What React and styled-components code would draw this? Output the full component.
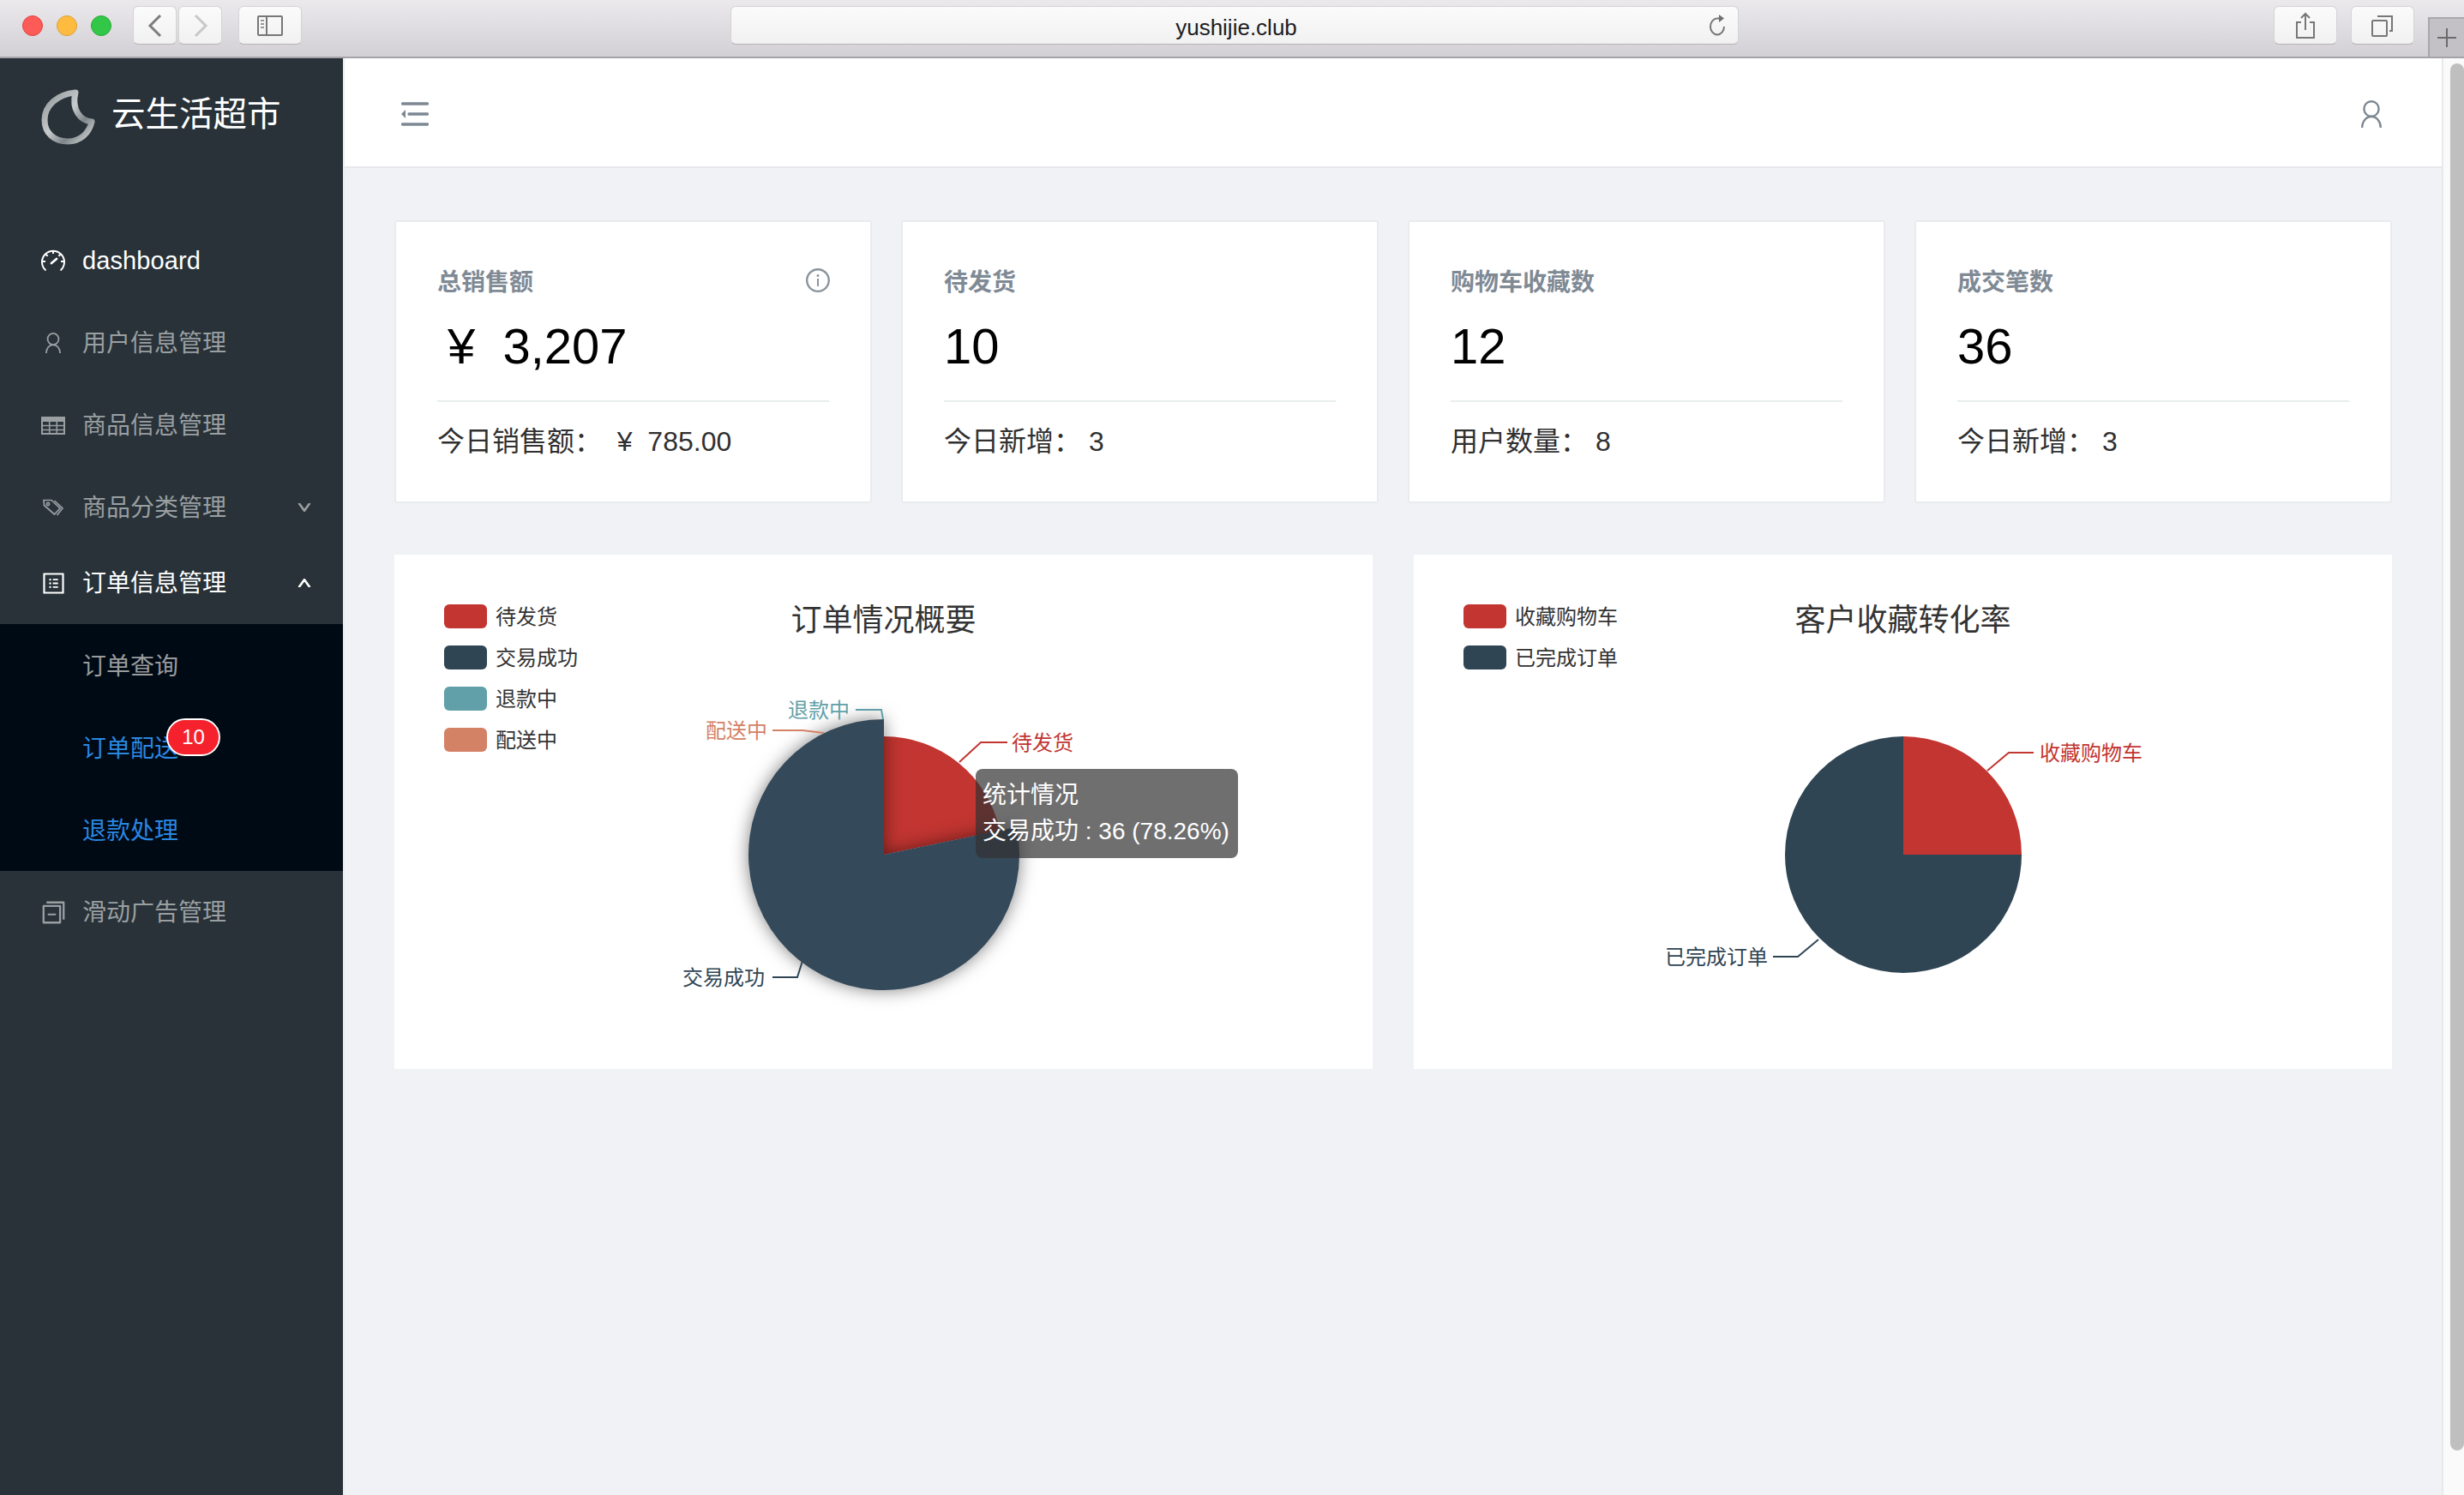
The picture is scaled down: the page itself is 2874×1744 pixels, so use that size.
import React from "react";
import styled, { createGlobalStyle } from "styled-components";
import { AiOutlineProfile, AiOutlineSwitcher, AiOutlineInfoCircle, AiOutlineDown, AiOutlineUp } from "react-icons/ai";

const FONT = `"Liberation Sans", "Noto Sans CJK SC", sans-serif`;

const GlobalStyle = createGlobalStyle`
	html, body { margin: 0; padding: 0; background: #f0f2f5; }
	body { font-family: ${FONT}; overflow: hidden; }
	* { box-sizing: border-box; }
`;

const Page = styled.div`
	width: 2874px;
	height: 1744px;
	display: flex;
	flex-direction: column;
	overflow: hidden;
`;

/* browser chrome */
const BrowserBar = styled.div`
	height: 68px;
	flex: none;
	display: flex;
	align-items: flex-start;
	padding: 7px 0 0 26px;
	background: linear-gradient(#ebe9ec, #d2d0d4);
	border-bottom: 2px solid #a5a3a7;
`;
const Light = styled.span`
	width: 24px;
	height: 24px;
	flex: none;
	margin: 11px 16px 0 0;
	border-radius: 50%;
	background: ${(p) => p.$color};
	border: 1px solid ${(p) => p.$edge};
`;
const ChromeButton = styled.div`
	width: ${(p) => p.$w}px;
	height: 45px;
	margin-left: ${(p) => p.$ml || 0}px;
	flex: none;
	display: flex;
	align-items: center;
	justify-content: center;
	border-radius: 6px;
	background: linear-gradient(#fbfbfb, #f2f1f2);
	border: 1px solid #d4d3d5;
	border-bottom-color: #b5b4b6;
`;
const AddressBar = styled.div`
	width: 1176px;
	height: 45px;
	margin-left: 500px;
	padding: 5px 0 0 4px;
	flex: none;
	display: flex;
	align-items: center;
	justify-content: center;
	position: relative;
	border-radius: 6px;
	background: linear-gradient(#fbfbfb, #f2f1f2);
	border: 1px solid #d4d3d5;
	border-bottom-color: #b5b4b6;
	font-size: 26px;
	color: #1d1d1d;
`;
const Reload = styled.svg`
	position: absolute;
	right: 12px;
	top: 9px;
`;
const NewTab = styled.div`
	width: 42px;
	height: 46px;
	margin: 13px 0 0 16px;
	flex: none;
	display: flex;
	align-items: center;
	justify-content: center;
	background: #c3c1c5;
	border: 2px solid #a9a7ab;
	border-width: 2px 0 0 2px;
`;

const Body = styled.div`
	flex: 1;
	display: flex;
	min-height: 0;
`;

/* sidebar */
const Sidebar = styled.aside`
	width: 400px;
	flex: none;
	background: #283238;
`;
const Brand = styled.div`
	height: 188px;
	display: flex;
	align-items: flex-start;
	padding: 36px 0 0 47px;
	gap: 17px;
	color: #fff;
`;
const BrandName = styled.span`
	font-size: 39.5px;
	line-height: 60px;
	font-family: "Liberation Serif", "Noto Sans CJK SC", serif;
`;
const MenuItem = styled.div`
	height: ${(p) => p.$h || 96}px;
	padding: ${(p) => (p.$h ? "0 36px 8px 48px" : "0 36px 0 48px")};
	display: flex;
	align-items: center;
	font-size: 28px;
	color: ${(p) => (p.$active ? "#fff" : "#9a9fa2")};
	svg.caret { font-size: 18px; margin-left: auto; stroke-width: 70; stroke: currentColor; }
`;
const IconSlot = styled.span`
	width: 28px;
	height: 28px;
	margin-right: 20px;
	flex: none;
	display: flex;
	align-items: center;
	justify-content: center;
	font-size: ${(p) => p.$size || 32}px;
	svg { flex: none; }
`;
/* the CJK face sits low in its line box, so lift it a little */
const MenuText = styled.span`
	margin-bottom: 4px;
`;
const LatinText = styled.span`
	font-size: 29px;
	letter-spacing: 0.1px;
`;
const SubMenu = styled.div`
	background: #000a14;
`;
const SubItem = styled.div`
	height: 96px;
	padding-left: 96px;
	display: flex;
	align-items: center;
	font-size: 28px;
	color: ${(p) => (p.$active ? "#2a87e2" : "#9a9b9d")};
`;
const SubLabel = styled.span`
	position: relative;
	margin-bottom: 3px;
`;
const Badge = styled.span`
	position: absolute;
	left: 98px;
	top: -13px;
	width: 63px;
	height: 44px;
	border-radius: 22px;
	background: #f5222d;
	border: 2px solid #fff;
	color: #fff;
	font-size: 24px;
	display: flex;
	align-items: center;
	justify-content: center;
`;

/* main column */
const Main = styled.main`
	flex: 1;
	min-width: 0;
	background: #f0f2f5;
	border-left: 2px solid #eaecef;
	border-right: 2px solid #e8e9ec;
	display: flex;
	flex-direction: column;
`;
const TopBar = styled.header`
	height: 128px;
	flex: none;
	background: #fff;
	border-bottom: 2px solid #e6e8ec;
	display: flex;
	align-items: center;
	justify-content: space-between;
	padding: 3px 70px 0 66px;
`;
const Content = styled.div`
	padding: 61px 58px 0 58px;
	display: flex;
	flex-direction: column;
	gap: 60px;
`;
const StatRow = styled.div`
	display: grid;
	grid-template-columns: repeat(4, 1fr);
	gap: 34px;
`;
const StatCard = styled.section`
	height: 330px;
	background: #fff;
	border: 2px solid #e9ebee;
	border-radius: 3px;
	padding: 48px 48px 0;
`;
const StatHead = styled.div`
	display: flex;
	justify-content: space-between;
	align-items: center;
	height: 40px;
	font-size: 28px;
	font-weight: 700;
	color: #7f8a95;
	svg { font-size: 32px; margin-right: -3px; color: #8a949d; }
`;
const StatValue = styled.div`
	height: 80px;
	margin-top: 16px;
	display: flex;
	align-items: center;
	font-size: 58px;
	color: #000;
	white-space: pre;
	padding-left: ${(p) => p.$pad || 0}px;
`;
const StatFoot = styled.div`
	margin-top: 24px;
	padding-top: 22px;
	border-top: 2px solid #e8eded;
	font-size: 32px;
	line-height: 48px;
	color: #303030;
	white-space: pre;
`;
const ChartRow = styled.div`
	display: grid;
	grid-template-columns: 1141px 1141px;
	justify-content: space-between;
`;
/* legend, title and canvas share one grid cell, as they do on an echarts canvas */
const ChartCard = styled.section`
	height: 600px;
	background: #fff;
	display: grid;
	position: relative;
	& > * { grid-area: 1 / 1; }
`;
const ChartCanvas = styled.svg`
	width: 1141px;
	height: 600px;
	display: block;
`;
const Legend = styled.ul`
	list-style: none;
	margin: 58px 0 0 58px;
	padding: 0;
	display: flex;
	flex-direction: column;
	gap: 20px;
	align-self: start;
	justify-self: start;
	z-index: 1;
`;
const LegendItem = styled.li`
	height: 28px;
	display: flex;
	align-items: center;
	gap: 10px;
	font-size: 24px;
	color: #333;
`;
const LegendText = styled.span`
	margin-bottom: 4px;
`;
const Swatch = styled.span`
	width: 50px;
	height: 28px;
	border-radius: 6px;
	background: ${(p) => p.$color};
`;
const ChartTitle = styled.h3`
	margin: 52px 0 0;
	font-size: 36px;
	line-height: 50px;
	font-weight: 400;
	color: #333;
	text-align: center;
	align-self: start;
	z-index: 1;
`;
const Slice = styled.path`
	filter: ${(p) => (p.$lifted ? "drop-shadow(0 0 10px rgba(0,0,0,.5))" : "none")};
`;
const Tooltip = styled.div`
	position: absolute;
	left: 678px;
	top: 250px;
	width: 306px;
	height: 104px;
	padding: 10px 8px 0;
	border-radius: 8px;
	background: rgba(50, 50, 50, 0.7);
	color: #fff;
	font-size: 28px;
	line-height: 42px;
	white-space: nowrap;
	z-index: 2;
`;

const Scrollbar = styled.div`
	width: 24px;
	flex: none;
	background: #fafafa;
	padding: 6px 0 52px 8px;
`;
const Thumb = styled.div`
	height: 100%;
	background: #bfbfbf;
	border-radius: 8px;
`;

const RED = "#c23531";
const NAVY = "#2f4554";
const TEAL = "#61a0a8";
const SALMON = "#d48265";

const orderChart = {
	title: "订单情况概要",
	legend: [["待发货", RED], ["交易成功", NAVY], ["退款中", TEAL], ["配送中", SALMON]],
	slices: [
		{ d: "M571 350 L571 212 A138 138 0 0 1 706.1 321.9 Z", color: RED },
		{ d: "M571 350 L725.7 317.8 A158 158 0 1 1 571 192 Z", color: "#34495a", lifted: true },
	],
	labels: [
		{ text: "待发货", x: 720, y: 219, color: RED, line: "659,242 684,219 715,219" },
		{ text: "退款中", x: 459, y: 181, color: TEAL, line: "538,181 568,181 570,192" },
		{ text: "配送中", x: 363, y: 205, color: SALMON, line: "441,205 476,205 501,208" },
		{ text: "交易成功", x: 336, y: 493, color: NAVY, line: "441,493 470,493 476,474" },
	],
};

const favChart = {
	title: "客户收藏转化率",
	legend: [["收藏购物车", RED], ["已完成订单", NAVY]],
	slices: [
		{ d: "M571 350 L571 212 A138 138 0 0 1 709 350 Z", color: RED },
		{ d: "M571 350 L709 350 A138 138 0 1 1 571 212 Z", color: NAVY },
	],
	labels: [
		{ text: "收藏购物车", x: 730, y: 231, color: RED, line: "669,252 694,231 723,231" },
		{ text: "已完成订单", x: 293, y: 469, color: NAVY, line: "419,469 448,469 472,449" },
	],
};

const stats = [
	{ title: "总销售额", value: "¥  3,207", pad: 12, foot: "今日销售额：  ¥  785.00", info: true },
	{ title: "待发货", value: "10", foot: "今日新增： 3" },
	{ title: "购物车收藏数", value: "12", foot: "用户数量： 8" },
	{ title: "成交笔数", value: "36", foot: "今日新增： 3" },
];

const PieCard = ({ chart, children }) => (
	<ChartCard>
		<ChartCanvas viewBox="0 0 1141 600">
			{chart.slices.map((s) => (
				<Slice key={s.color} d={s.d} fill={s.color} $lifted={s.lifted} />
			))}
			{chart.labels.map((l) => (
				<g key={l.text}>
					<polyline points={l.line} fill="none" stroke={l.color} strokeWidth="2" />
					<text x={l.x} y={l.y + 9} fill={l.color} fontSize="24" fontFamily={FONT}>{l.text}</text>
				</g>
			))}
		</ChartCanvas>
		<Legend>
			{chart.legend.map(([name, color]) => (
				<LegendItem key={name}><Swatch $color={color} /><LegendText>{name}</LegendText></LegendItem>
			))}
		</Legend>
		<ChartTitle>{chart.title}</ChartTitle>
		{children}
	</ChartCard>
);

const LogoMark = () => (
	<svg width="66" height="66" viewBox="0 0 66 66">
		<defs>
			<linearGradient id="logoFade" x1="0" y1="0" x2="1" y2="1">
				<stop offset="0" stopColor="#8f9599" />
				<stop offset="0.45" stopColor="#c8cbcd" />
				<stop offset="0.7" stopColor="#7f868a" />
				<stop offset="1" stopColor="#d7d9da" />
			</linearGradient>
		</defs>
		<path d="M41 4 C20 6 5 19 5 36 C5 51 16 61 32 61 C47 61 57 51 60 38 C47 37 36 24 41 4 Z" fill="none" stroke="url(#logoFade)" strokeWidth="7" strokeLinejoin="round" />
	</svg>
);

const UserIcon = ({ w, h, color = "currentColor" }) => (
	<svg width={w} height={h} viewBox="0 0 24 32" fill="none" stroke={color} strokeWidth="2.4">
		<ellipse cx="12" cy="10" rx="8.6" ry="8.8" />
		<path d="M1.2 32 C1.2 24.5 6 19 12 19 C18 19 22.8 24.5 22.8 32" />
	</svg>
);

const GaugeIcon = () => (
	<svg width="28" height="26" viewBox="0 0 28 26" fill="none" stroke="currentColor" strokeWidth="2">
		<path d="M5.5 24.5 A13 13 0 1 1 22.5 24.5" />
		<path d="M14 1 V5 M1 14 H5 M27 14 H23 M4.8 5 L7.6 7.8 M23.2 5 L20.4 7.8" />
		<path d="M12 16 L18 11" strokeWidth="2.8" strokeLinecap="round" />
	</svg>
);

const TableIcon = () => (
	<svg width="28" height="21" viewBox="0 0 28 21" fill="none" stroke="currentColor">
		<rect x="1" y="1" width="26" height="19" strokeWidth="2" />
		<rect x="0" y="0" width="28" height="6" rx="1" fill="currentColor" stroke="none" />
		<path d="M1 10.5 H27 M1 15.5 H27 M9.7 6 V20 M18.3 6 V20" strokeWidth="1.6" />
	</svg>
);

const TagIcon = () => (
	<svg width="24" height="20" viewBox="0 0 24 20" fill="none" stroke="currentColor" strokeWidth="1.7">
		<path d="M1 1.5 H10 L20 11 L13.5 18 L1.5 7.5 Z" />
		<circle cx="6" cy="6" r="1.6" />
		<path d="M13.5 2 L23 11 L16.5 19" />
	</svg>
);

const App = () => (
	<Page>
		<GlobalStyle />
		<BrowserBar>
			<Light $color="#fc5b57" $edge="#e0443e" />
			<Light $color="#fdbc40" $edge="#dea034" />
			<Light $color="#33c748" $edge="#27aa35" />
			<ChromeButton $w={51} $ml={9}>
				<svg width="18" height="28" viewBox="0 0 18 28"><path d="M15 2 L3 14 L15 26" fill="none" stroke="#7d7d7d" strokeWidth="3" /></svg>
			</ChromeButton>
			<ChromeButton $w={51} $ml={2}>
				<svg width="18" height="28" viewBox="0 0 18 28"><path d="M3 2 L15 14 L3 26" fill="none" stroke="#c8c8c8" strokeWidth="3" /></svg>
			</ChromeButton>
			<ChromeButton $w={74} $ml={19}>
				<svg width="30" height="24" viewBox="0 0 30 24">
					<rect x="1" y="1" width="28" height="22" rx="1" fill="none" stroke="#777" strokeWidth="2" />
					<path d="M11 1 V23" stroke="#777" strokeWidth="2" />
					<path d="M4 6 H8 M4 10 H8 M4 14 H8" stroke="#999" strokeWidth="2" />
				</svg>
			</ChromeButton>
			<AddressBar>
				yushijie.club
				<Reload width="24" height="26" viewBox="0 0 24 26">
					<path d="M20 14 A8 9.5 0 1 1 12 4.5 H16" fill="none" stroke="#777" strokeWidth="2" />
					<path d="M14 0 L20 4.5 L14 9 Z" fill="#6f6f6f" />
				</Reload>
			</AddressBar>
			<ChromeButton $w={74} $ml={624}>
				<svg width="24" height="32" viewBox="0 0 24 32">
					<path d="M7 12 H2 V30 H22 V12 H17" fill="none" stroke="#777" strokeWidth="2" />
					<path d="M12 21 V2 M7 7 L12 2 L17 7" fill="none" stroke="#777" strokeWidth="2" />
				</svg>
			</ChromeButton>
			<ChromeButton $w={74} $ml={16}>
				<svg width="26" height="26" viewBox="0 0 26 26">
					<rect x="1" y="7" width="17" height="18" rx="1" fill="none" stroke="#777" strokeWidth="2" />
					<path d="M7 2 H24 V19 H21" fill="none" stroke="#777" strokeWidth="2" />
				</svg>
			</ChromeButton>
			<NewTab>
				<svg width="24" height="24" viewBox="0 0 24 24"><path d="M12 1 V23 M1 12 H23" stroke="#6b6b6b" strokeWidth="2" /></svg>
			</NewTab>
		</BrowserBar>
		<Body>
			<Sidebar>
				<Brand><LogoMark /><BrandName>云生活超市</BrandName></Brand>
				<MenuItem $active><IconSlot><GaugeIcon /></IconSlot><LatinText>dashboard</LatinText></MenuItem>
				<MenuItem><IconSlot><UserIcon w={18} h={24} /></IconSlot><MenuText>用户信息管理</MenuText></MenuItem>
				<MenuItem><IconSlot><TableIcon /></IconSlot><MenuText>商品信息管理</MenuText></MenuItem>
				<MenuItem><IconSlot><TagIcon /></IconSlot><MenuText>商品分类管理</MenuText><AiOutlineDown className="caret" /></MenuItem>
				<MenuItem $active $h={88}><IconSlot $size={31}><AiOutlineProfile /></IconSlot><MenuText>订单信息管理</MenuText><AiOutlineUp className="caret" /></MenuItem>
				<SubMenu>
					<SubItem><SubLabel>订单查询</SubLabel></SubItem>
					<SubItem $active><SubLabel>订单配送<Badge>10</Badge></SubLabel></SubItem>
					<SubItem $active><SubLabel>退款处理</SubLabel></SubItem>
				</SubMenu>
				<MenuItem><IconSlot $size={33}><AiOutlineSwitcher /></IconSlot><MenuText>滑动广告管理</MenuText></MenuItem>
			</Sidebar>
			<Main>
				<TopBar>
					<svg width="32" height="28" viewBox="0 0 32 28">
						<path d="M1.5 2 H30.5 M9 14 H30.5 M1.5 26 H30.5" stroke="#7c8894" strokeWidth="3.4" strokeLinecap="round" />
						<path d="M0 14 L5 9 V19 Z" fill="#7c8894" />
					</svg>
					<UserIcon w={24} h={32} color="#7c8894" />
				</TopBar>
				<Content>
					<StatRow>
						{stats.map((s) => (
							<StatCard key={s.title}>
								<StatHead>{s.title}{s.info && <AiOutlineInfoCircle />}</StatHead>
								<StatValue $pad={s.pad}>{s.value}</StatValue>
								<StatFoot>{s.foot}</StatFoot>
							</StatCard>
						))}
					</StatRow>
					<ChartRow>
						<PieCard chart={orderChart}>
							<Tooltip>统计情况<br />交易成功 : 36 (78.26%)</Tooltip>
						</PieCard>
						<PieCard chart={favChart} />
					</ChartRow>
				</Content>
			</Main>
			<Scrollbar><Thumb /></Scrollbar>
		</Body>
	</Page>
);

export default App;
